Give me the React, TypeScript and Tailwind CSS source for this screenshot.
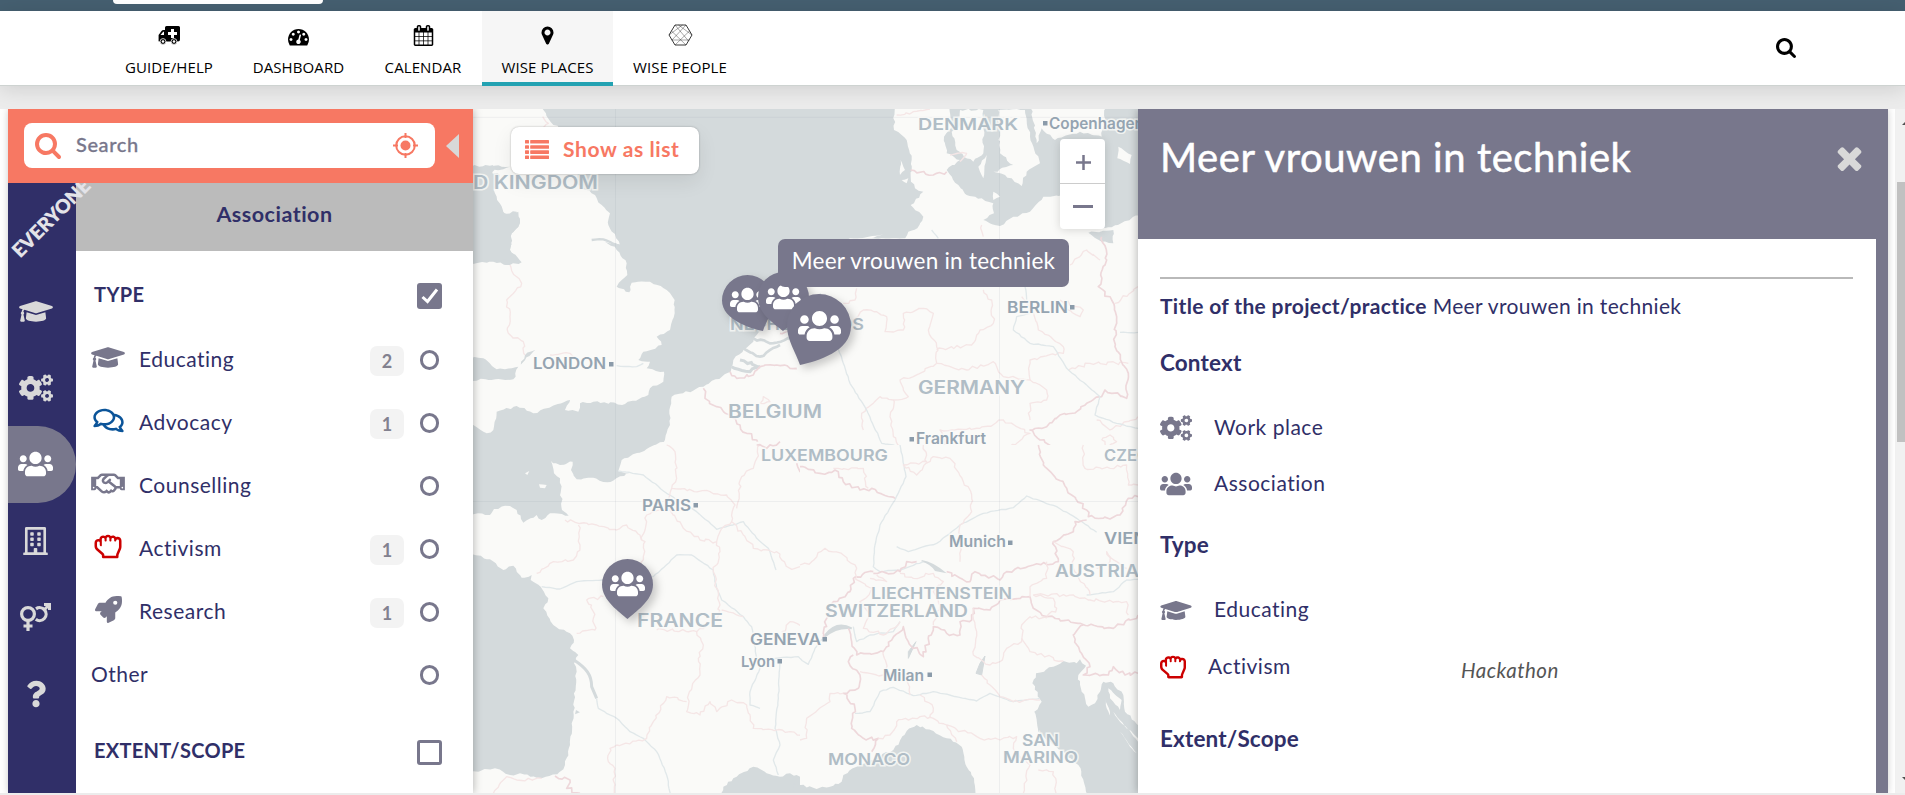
import type { ReactNode } from "react";
import {
  FaCogs,
  FaGraduationCap,
  FaQuestion,
  FaRegBuilding,
  FaRegComments,
  FaRegHandRock,
  FaRegHandshake,
  FaRocket,
  FaUsers,
} from "react-icons/fa";

/* ---------- icons ---------- */

type IconProps = { className?: string };

function Glyph({ d, className, box = "0 0 1792 1792" }: { d: string; className?: string; box?: string }) {
  return (
    <svg viewBox={box} fill="currentColor" className={className}>
      <path d={d} />
    </svg>
  );
}

const searchPath =
  "M1216 832q0-185-131.5-316.5t-316.5-131.5-316.5 131.5-131.5 316.5 131.5 316.5 316.5 131.5 316.5-131.5 131.5-316.5zm512 832q0 52-38 90t-90 38q-54 0-90-38l-343-342q-179 124-399 124-143 0-273.5-55.5t-225-150-150-225-55.5-273.5 55.5-273.5 150-225 225-150 273.5-55.5 273.5 55.5 225 150 150 225 55.5 273.5q0 220-124 399l343 343q37 37 37 90z";
const timesPath =
  "M1490 1322q0 40-28 68l-136 136q-28 28-68 28t-68-28l-294-294-294 294q-28 28-68 28t-68-28l-136-136q-28-28-28-68t28-68l294-294-294-294q-28-28-28-68t28-68l136-136q28-28 68-28t68 28l294 294 294-294q28-28 68-28t68 28l136 136q28 28 28 68t-28 68l-294 294 294 294q28 28 28 68z";
const calendarPath =
  "M192 1664h288v-288h-288v288zm352 0h320v-288h-320v288zm-352-352h288v-320h-288v320zm352 0h320v-320h-320v320zm-352-384h288v-288h-288v288zm736 736h320v-288h-320v288zm-384-736h320v-288h-320v288zm768 736h288v-288h-288v288zm-384-352h320v-320h-320v320zm-352-864v-288q0-13-9.5-22.5t-22.5-9.5h-64q-13 0-22.5 9.5t-9.5 22.5v288q0 13 9.5 22.5t22.5 9.5h64q13 0 22.5-9.5t9.5-22.5zm736 864h288v-320h-288v320zm-384-384h320v-288h-320v288zm384 0h288v-288h-288v288zm32-480v-288q0-13-9.5-22.5t-22.5-9.5h-64q-13 0-22.5 9.5t-9.5 22.5v288q0 13 9.5 22.5t22.5 9.5h64q13 0 22.5-9.5t9.5-22.5zm384-64v1280q0 52-38 90t-90 38h-1408q-52 0-90-38t-38-90v-1280q0-52 38-90t90-38h128v-96q0-66 47-113t113-47h64q66 0 113 47t47 113v96h384v-96q0-66 47-113t113-47h64q66 0 113 47t47 113v96h128q52 0 90 38t38 90z";
const dashboardPath =
  "M384 1152q0-53-37.5-90.5t-90.5-37.5-90.5 37.5-37.5 90.5 37.5 90.5 90.5 37.5 90.5-37.5 37.5-90.5zm192-448q0-53-37.5-90.5t-90.5-37.5-90.5 37.5-37.5 90.5 37.5 90.5 90.5 37.5 90.5-37.5 37.5-90.5zm428 481l101-382q6-26-7.5-48.5t-38.5-29.5-48 6.5-30 39.5l-101 382q-60 5-107 43.5t-63 98.5q-20 77 20 146t117 89 146-20 89-117q16-60-6-117t-72-91zm660-33q0-53-37.5-90.5t-90.5-37.5-90.5 37.5-37.5 90.5 37.5 90.5 90.5 37.5 90.5-37.5 37.5-90.5zm-640-640q0-53-37.5-90.5t-90.5-37.5-90.5 37.5-37.5 90.5 37.5 90.5 90.5 37.5 90.5-37.5 37.5-90.5zm448 192q0-53-37.5-90.5t-90.5-37.5-90.5 37.5-37.5 90.5 37.5 90.5 90.5 37.5 90.5-37.5 37.5-90.5zm320 448q0 261-141 483-19 29-54 29h-1402q-35 0-54-29-141-221-141-483 0-182 71-348t191-286 286-191 348-71 348 71 286 191 191 286 71 348z";
const markerPath =
  "M1152 640q0-106-75-181t-181-75-181 75-75 181 75 181 181 75 181-75 75-181zm256 0q0 109-33 179l-364 774q-16 33-47.5 52t-67.5 19-67.5-19-46.5-52l-365-774q-33-70-33-179 0-212 150-362t362-150 362 150 150 362z";

function Ambulance({ className }: IconProps) {
  return (
    <svg viewBox="0 0 22 19" className={className}>
      <path fillRule="evenodd" d="M7 1.5Q7 0 8.5 0H20.500Q22 0 22 1.500V13.500Q22 15.500 20 15.500H1.500Q0 15.500 .6 14V9L3.500 5Q4.200 4 5.500 4H7ZM2.500 9H6V5.800H5.200ZM13 3V6H10V9H13V12H16V9H19V6H16V3Z" />
      <circle cx="5" cy="15.500" r="2.900" stroke="#fff" strokeWidth=".8" />
      <circle cx="5" cy="15.500" r="1.300" fill="#fff" />
      <circle cx="16" cy="15.500" r="2.900" stroke="#fff" strokeWidth=".8" />
      <circle cx="16" cy="15.500" r="1.300" fill="#fff" />
    </svg>
  );
}

function HexNet({ className }: IconProps) {
  return (
    <svg viewBox="0 0 24 22" fill="none" stroke="#222" className={className}>
      <path d="M6.500 1H17.500L23.500 11L17.500 21H6.500L.5 11Z" strokeWidth=".9" />
      <path d="M6.500 1L20 17M17.500 1L3.500 16M3 7L17.500 21M21 7L6.500 21M.5 11L14 1M23.500 11L10 1M3 16H21" strokeWidth=".4" />
    </svg>
  );
}

function Crosshair({ className }: IconProps) {
  return (
    <svg viewBox="0 0 25 25" fill="none" stroke="currentColor" strokeWidth="2" className={className}>
      <circle cx="12.500" cy="12.500" r="9.300" />
      <circle cx="12.500" cy="12.500" r="5" fill="currentColor" stroke="none" />
      <path d="M12.500 0V5M12.500 20V25M0 12.500H5M20 12.500H25" />
    </svg>
  );
}

function ListRows({ className }: IconProps) {
  return (
    <svg viewBox="0 0 24 19" fill="currentColor" className={className}>
      {[0, 5.2, 10.3, 15.4].map((y) => (
        <g key={y}>
          <rect x="0" y={y} width="4" height="3.600" rx=".6" />
          <rect x="5.200" y={y} width="18.800" height="3.600" rx=".6" />
        </g>
      ))}
    </svg>
  );
}

function Genders({ className }: IconProps) {
  return (
    <svg viewBox="0 0 31 28" fill="none" stroke="currentColor" strokeWidth="3.200" className={className}>
      <circle cx="8" cy="11" r="6.400" />
      <path d="M8 17.500V28M3.500 23H12.500" />
      <path d="M16 5.900A6.400 6.400 0 1 1 15.800 16.200" />
      <path d="M24.500 6.500L29.500 1.500M24 1.500H29.500V7" strokeWidth="3" />
    </svg>
  );
}

/* ---------- map geometry ---------- */

type Pt = [number, number];

function parse(s: string): Pt[] {
  return s
    .trim()
    .split(/\s+/)
    .map((p) => p.split(",").map(Number) as Pt);
}

// Adds small deterministic wiggles to a polyline so that it reads as a coast or a border.
function rough(src: string, amp: number, close = false): string {
  const pts = parse(src);
  if (close) pts.push(pts[0]);
  let seed = pts.length * 7919 + Math.round(Math.abs(pts[0][0]) * 31 + Math.abs(pts[0][1]));
  const rnd = () => {
    seed = (seed * 1103515245 + 12345) % 2147483648;
    return seed / 2147483648 - 0.5;
  };
  const out: string[] = [`M${pts[0][0]} ${pts[0][1]}`];
  for (let i = 1; i < pts.length; i++) {
    const [x0, y0] = pts[i - 1];
    const [x1, y1] = pts[i];
    const len = Math.hypot(x1 - x0, y1 - y0);
    const n = Math.max(1, Math.round(len / 11));
    for (let k = 1; k <= n; k++) {
      const t = k / n;
      const j = k === n ? 0 : amp;
      out.push(`L${(x0 + (x1 - x0) * t + rnd() * j).toFixed(1)} ${(y0 + (y1 - y0) * t + rnd() * j).toFixed(1)}`);
    }
  }
  return out.join("") + (close ? "Z" : "");
}

const LAND = "#fafaf8";
const SEA = "#d4dadc";

const Land = ({ p, a = 7 }: { p: string; a?: number }) => <path d={rough(p, a, true)} fill={LAND} />;
const Sea = ({ p, a = 7 }: { p: string; a?: number }) => <path d={rough(p, a, true)} fill={SEA} />;
const Region = ({ p }: { p: string }) => (
  <path d={rough(p, 10)} fill="none" stroke="#f5e6e6" strokeWidth="4" strokeLinejoin="round" />
);
const Border = ({ p }: { p: string }) => (
  <path d={rough(p, 11)} fill="none" stroke="#eed8db" strokeWidth="5" strokeLinejoin="round" />
);
const River = ({ p }: { p: string }) => (
  <path d={rough(p, 3)} fill="none" stroke="#e1e8ea" strokeWidth="4" strokeLinejoin="round" />
);

function Label({ x, y, w, size, children, city }: { x: number; y: number; w: number; size: number; children: string; city?: boolean }) {
  return (
    <text
      x={x}
      y={y - 0.5}
      textLength={w}
      lengthAdjust="spacingAndGlyphs"
      fontSize={size}
      fontWeight={600}
      fill={city ? "#95a4b1" : "#b0bdc6"}
      stroke="#fafaf8"
      strokeOpacity=".8"
      strokeWidth="3"
      paintOrder="stroke"
    >
      {children}
    </text>
  );
}

function EuropeMap() {
  return (
    <svg viewBox="473 109 665 684" className="block h-[684px] w-[665px] bg-[#d4dadc] font-['Inter','Liberation_Sans',sans-serif]">
      {/* north-west: Britain and the Channel */}
      <g transform="translate(470 100) scale(.33333)">
        <Land p="-20,0 218,27 250,75 300,95 330,190 320,250 375,285 395,315 420,340 415,375 450,435 405,425 440,450 470,490 472,525 440,560 478,577 485,548 540,545 590,570 614,600 614,640 600,690 560,710 575,735 520,755 505,780 540,785 530,805 582,815 580,845 540,865 535,885 465,912 370,905 330,910 325,935 285,930 300,900 230,925 190,940 140,918 80,935 70,990 50,1000 10,975 -20,980 -20,840 130,838 145,800 195,750 165,765 145,800 80,808 40,775 -20,770 -20,490 70,485 120,495 155,487 120,450 125,400 150,370 145,335 115,345 95,330 70,280 90,225 60,215 70,195 -20,200" />
        <Sea p="-20,230 65,210 75,280 100,340 140,335 145,380 125,400 120,450 150,485 90,480 -20,490" />
        <Sea p="40,220 120,200 72,197" />
        <path d={rough("365,420 400,418 450,437", 4)} fill="none" stroke={SEA} strokeWidth="7" />
        <Land p="1400,500 960,540 905,660 860,705 850,725 790,780 782,815 700,860 605,890 598,930 600,975 580,1030 520,1055 1400,1055" />
        <path d={rough("850,715 900,730 960,715", 8)} fill="none" stroke={SEA} strokeWidth="8" />
        <path d={rough("820,745 870,770 930,735", 8)} fill="none" stroke={SEA} strokeWidth="8" />
        <path d={rough("785,800 840,815 870,800 810,780", 8)} fill="none" stroke={SEA} strokeWidth="9" />
        <Region p="218,50 235,70 190,110 170,150" />
        <Region p="120,495 140,530 155,550 110,600 120,650 115,700 160,725 165,765" />
        <River p="440,797 500,800 520,790" />
        <Region p="240,765 300,760 315,770" />
        <Border p="780,815 800,835 850,825 870,800 920,795 960,805 1020,820 1050,850" />
        <Border p="700,865 705,895 740,920 780,945 810,975 830,1000 860,1020 870,1045 920,1040" />
        <Border p="1060,800 1040,850 1070,890 1080,950 1090,970 1050,1000 1020,1050" />
        <Border p="930,700 980,690 1010,640 1080,620 1160,600 1160,560" />
        <Region p="870,910 900,905 880,890 870,910" />
      </g>

      {/* north-east: Denmark and Germany */}
      <g transform="translate(800 100) scale(.33333)">
        <Land a={2} p="310,415 1060,415 1060,1060 -10,1060 -10,500 150,415" />
        <Land p="285,0 282,90 320,120 335,180 332,230 345,265 370,275 332,315 370,350 352,385 325,395 310,425 1060,425 1060,0" />
        <Sea p="440,0 460,75 432,110 440,160 480,180 440,210 475,255 500,285 545,295 580,310 582,340 550,360 600,378 640,350 690,335 730,290 790,285 870,295 850,380 935,382 1060,325 1060,0 920,0 905,110 840,95 765,120 725,85 710,130 690,0" />
        <Land p="480,30 550,30 550,160 520,185 470,150 455,95 480,75" />
        <Land p="595,30 675,30 690,110 720,190 680,215 665,258 635,235 580,215 640,195 600,160" />
        <Land p="560,165 550,235 535,200" a={4} />
        <Land p="955,140 995,165 990,192 952,175" a={4} />
        <Land p="580,275 600,290 580,300" a={4} />
        <Sea p="865,398 940,390 940,430 905,425" a={5} />
        <Land p="302,180 315,210 300,225" a={4} />
        <Land p="305,240 325,235 320,250" a={4} />
        <Land p="185,415 250,403 210,415" a={3} />
        <Border p="332,210 400,225 440,215" />
        <Region p="290,45 340,35 390,27" />
        <Region p="545,375 550,410" />
        <Region p="170,565 165,600 130,610" />
        <Region p="155,665 190,630 230,635 260,650 255,695 310,690 310,640 370,625 400,640 385,690 410,740 410,790" />
        <Region p="550,570 575,600 580,670 540,690 515,735 410,750" />
        <Region p="410,790 340,830 300,840 325,890 280,900 240,890 185,940 190,990" />
        <Region p="410,790 500,810 580,785 610,830 690,840 740,870 740,900 690,910 690,960" />
        <Region p="690,840 690,780 790,760 790,740 715,690 690,620 665,590" />
        <Region p="780,600 850,630 840,650 790,620" />
        <Region p="805,810 870,790 985,790" />
        <Region p="810,495 860,450 900,480" />
        <Region p="945,610 1014,560" />
        <Region p="280,900 270,950 280,1010 310,1050" />
        <Region p="600,1060 690,1000 610,960 540,985 420,990 440,1050" />
        <Region p="905,1020 930,1005 950,1025 925,1040 905,1020" />
        <Region p="890,960 930,990 1014,950" />
        <Region p="480,185 500,160 450,165" />
        <Border p="905,410 920,480 895,560 935,600 950,650 945,740 985,820 980,895 915,870 905,890 860,910 830,935 780,945 740,980 690,990 720,1020 780,1050" />
        <River p="395,390 415,415" />
        <River p="60,580 130,790 150,850 200,930 245,1030 300,1040" />
        <River p="690,640 650,650 640,690 690,730 760,740 800,805 900,890 885,945 950,970 1014,985" />
        <River p="960,697 1014,697" />
        <River p="675,560 680,600" />
      </g>

      {/* south-west: France */}
      <g transform="translate(470 445) scale(.33333)">
        <Land p="570,-8 530,12 455,45 445,78 480,85 412,112 355,98 320,103 303,75 308,50 270,60 243,48 252,85 270,100 276,195 296,212 240,205 215,225 200,210 160,233 140,195 120,183 72,192 60,210 -10,203 -10,325 60,343 100,375 130,362 155,398 185,390 182,405 212,425 235,460 220,490 250,540 300,565 312,585 300,610 325,630 312,655 320,680 310,800 300,900 285,960 262,988 215,1000 150,985 120,990 75,970 -10,985 -10,1060 1060,1060 1060,-8" />
        <Land p="165,85 178,78 172,90" a={2} />
        <Land p="207,118 230,120 225,130 210,128" a={2} />
        <Sea p="318,795 330,802 315,808" a={3} />
        <Sea p="745,1070 760,1025 800,995 850,965 890,985 930,995 960,985 1060,1025 1060,1070" />
        <path d="M312 645C350 670 365 690 365 725L380 760" fill="none" stroke={SEA} strokeWidth="9" />
        <River p="380,760 385,790 440,820 480,860 520,880 560,920 590,990 602,1050" />
        <River p="215,425 270,432 320,410 400,405 550,395 620,330 665,330 730,375 740,430 755,465 820,515 845,545 860,640 870,670 840,740 840,780 870,790" />
        <River p="445,78 520,90 590,145 680,200 740,253 820,230 860,280 895,310 918,375" />
        <River p="930,650 925,760 915,850 930,900 910,945 925,990" />
        <River p="860,645 985,635 1020,660" />
        <Region p="590,0 615,20 620,100 605,130 720,140 770,150 795,180 785,230 820,270 850,310 920,320 960,370 1020,360" />
        <Region p="870,0 850,70 815,95 800,190" />
        <Region p="605,130 590,180 640,250 690,285 740,290 750,260 785,230" />
        <Region p="285,225 380,240 440,255 470,240 510,270 525,290 515,350 470,400 440,415" />
        <Region p="325,240 330,300 310,345 250,350 200,385" />
        <Region p="515,285 530,210 580,195" />
        <Region p="740,290 750,320 730,380 750,480 740,520 680,560 560,555" />
        <Region p="320,565 375,555 370,500 350,465 400,455" />
        <Region p="680,560 700,600 685,640 690,690 655,750 650,800 690,810 720,770 740,800 785,765 830,780 850,850 960,860 1020,880" />
        <Region p="650,770 590,755 550,830 530,880 420,910 415,950 435,970 430,1050" />
        <Region p="755,495 800,510 820,515" />
        <Region p="935,560 960,530 1020,560" />
        <Border p="255,993 300,1005 290,1030 330,1045" />
        <Region p="70,1045 110,995 140,1005 215,1000" />
        <Border p="860,0 890,10 930,-10" />
        <Border p="980,55 990,80 1020,60" />
      </g>

      {/* south-east: the Alps and Italy */}
      <g transform="translate(800 445) scale(.33333)">
        <path d="M0 0H1030V1070H0Z" fill={LAND} />
        <Sea p="-20,1015 50,1032 100,1022 125,1010 130,990 170,965 280,915 320,858 350,840 400,858 440,880 485,905 500,965 522,1000 525,1070 -20,1070" />
        <Sea p="870,1070 835,960 760,900 715,860 703,800 725,770 697,715 708,685 760,665 790,648 830,655 840,643 858,662 835,690 845,740 865,785 885,775 900,740 910,710 940,715 970,750 975,800 1060,880 1060,1070" />
        <Land p="925,730 965,765 960,795 930,760" a={4} />
        <Land p="915,760 935,820 920,790" a={4} />
        <Land p="940,800 1014,890 1014,880 960,830" a={4} />
        <Land p="960,860 1010,925 990,905" a={4} />
        <path d="M75 570Q110 525 155 550Q110 545 75 575Z" fill={SEA} stroke={SEA} strokeWidth="5" />
        <path d="M365 345Q400 350 440 385L405 378Q390 355 365 350Z" fill={SEA} />
        <path d="M555 633L545 690L528 685L540 655ZM348 590L325 640L325 620Z" fill={SEA} stroke={SEA} strokeWidth="3" />
        <River p="300,0 318,95 285,165 240,240 225,300 220,365 240,380 300,375 370,350" />
        <River p="290,305 325,320 410,295 480,240 550,205 640,188 680,153 770,185 830,220 890,262" />
        <River p="160,545 170,590 210,570 280,560 300,530" />
        <River p="165,805 210,800 240,740 280,727 340,752 400,740 530,768 570,745 640,770 720,760" />
        <River p="0,640 25,658 45,610 70,580" />
        <River p="860,450 940,440 980,405 1014,403" />
        <Border p="0,65 60,85 105,75 130,110 180,135 215,130 285,160" />
        <Border p="715,0 730,60 800,130 860,195 865,215 930,222 960,210 985,160 1014,155" />
        <Border p="860,225 825,230 820,260 760,290 775,350 700,360 620,380 600,405 525,380 510,410 440,380" />
        <Border p="220,380 160,400 150,440 100,470 80,520 70,580" />
        <Border p="145,550 155,590 170,630 250,620 310,545 325,590 370,635 400,545 440,565 480,570 480,530 515,525 520,490 570,495 600,465 690,455 700,490 740,515 840,535 940,550 1014,510" />
        <Border p="220,385 300,380 320,350 350,350" />
        <Border p="160,630 145,650 180,690 175,730 130,745 165,790 155,850 190,880 235,880 215,920" />
        <Border p="850,540 820,570 840,620 870,665 850,690 925,690 940,665 975,690 1014,685" />
        <Region p="370,0 380,50 310,60 350,90 400,35 450,40 490,110 515,150 515,200 480,240 480,350" />
        <Region p="850,0 855,70 930,70 980,60 985,120 1014,120" />
        <Region p="0,360 35,350 75,310 130,330 170,370 170,400" />
        <Region p="690,455 690,425 740,400 740,350" />
        <Region p="700,450 760,460 770,490 740,515" />
        <Region p="700,450 820,450 870,465 980,470 985,510" />
        <Region p="760,290 820,320 820,370 870,450" />
        <Region p="520,490 530,560 520,630 570,660 600,650 620,610 665,590 665,540 690,515 740,520" />
        <Region p="665,580 690,620 790,648" />
        <Region p="545,690 570,720 600,755 640,770 720,765" />
        <Region p="165,400 220,430 180,470 210,510 190,550 250,570 300,530" />
        <Region p="300,385 340,400 400,385 430,410 400,440 420,480 400,540" />
        <Region p="210,400 260,410 230,390" />
        <Region p="250,620 260,680 320,690 330,750" />
        <Region p="180,680 250,690" />
        <Region p="130,745 90,745 90,770 20,820 20,880 0,885" />
        <Region p="235,880 270,870 290,830 360,815 400,820 440,840 470,890" />
        <Region p="360,750 400,790 390,820" />
        <Region p="440,840 540,880 600,885 650,875 640,910 690,960 670,1045" />
        <Region p="715,975 760,980 768,1045" />
        <Region p="100,70 190,70 205,130" />
        <Region p="890,370 930,350 920,320 950,350 980,370" />
      </g>

      <path d="M615.500 109V793M999.500 109V793M473 117.300H1138M473 501.500H1138" stroke="#8a96a0" strokeOpacity=".11" />

      <Label x={473} y={189.5} w={125} size={18}>D KINGDOM</Label>
      <Label x={918} y={130} w={100} size={16.5}>DENMARK</Label>
      <Label x={533} y={369.5} w={73} size={15.5} city>LONDON</Label>
      <Label x={730} y={330} w={134} size={16}>NETHERLANDS</Label>
      <Label x={728} y={418} w={94} size={18}>BELGIUM</Label>
      <Label x={918} y={394.5} w={107} size={18}>GERMANY</Label>
      <Label x={1007} y={313} w={61} size={16} city>BERLIN</Label>
      <Label x={1049} y={129} w={95} size={15.5} city>Copenhagen</Label>
      <Label x={916} y={444.5} w={70} size={15.5} city>Frankfurt</Label>
      <Label x={761} y={461} w={127} size={16}>LUXEMBOURG</Label>
      <Label x={1104} y={461} w={74} size={16}>CZECHIA</Label>
      <Label x={642} y={511.5} w={49} size={15.5} city>PARIS</Label>
      <Label x={949} y={547.5} w={57} size={15.5} city>Munich</Label>
      <Label x={1104} y={544} w={70} size={16} city>VIENNA</Label>
      <Label x={1055} y={577} w={84} size={17}>AUSTRIA</Label>
      <Label x={637} y={627} w={86} size={18}>FRANCE</Label>
      <Label x={871} y={599} w={141} size={16}>LIECHTENSTEIN</Label>
      <Label x={825} y={617} w={143} size={17}>SWITZERLAND</Label>
      <Label x={750} y={645.5} w={71} size={15.5} city>GENEVA</Label>
      <Label x={741} y={667} w={34} size={15} city>Lyon</Label>
      <Label x={883} y={681} w={41} size={15.5} city>Milan</Label>
      <Label x={828} y={765} w={82} size={16.5}>MONACO</Label>
      <Label x={1022} y={746.5} w={37} size={16.5}>SAN</Label>
      <Label x={1003} y={763.5} w={75} size={16.5}>MARINO</Label>
      <g fill="#8b9baa">
        {[[609, 362], [1043, 121], [1070, 305], [909.5, 437], [693.5, 503], [1008, 540.5], [822.5, 637], [777.5, 659], [927.5, 672.5]].map(([x, y]) => (
          <rect key={`${x}-${y}`} x={x} y={y} width="4.500" height="4.500" />
        ))}
      </g>
    </svg>
  );
}

/* ---------- pins ---------- */

function Pin({ d, box, className, children }: { d: string; box: string; className: string; children: ReactNode }) {
  return (
    <div className={`absolute ${className}`}>
      <svg viewBox={box} className="absolute inset-0 h-full w-full overflow-visible fill-[#78778c] drop-shadow-[4px_4px_4px_rgba(0,0,0,.2)]">
        <path d={d} />
      </svg>
      {children}
    </div>
  );
}

const pinBody = "M25.500 60C18 53 0 42 0 25.500A25.500 25.500 0 0 1 51 25.500C51 42 33 53 25.500 60Z";

function MapPins() {
  return (
    <>
      <Pin className="left-[129px] top-[450px] h-[60px] w-[51px]" box="0 0 51 60" d={pinBody}>
        <FaUsers className="absolute left-[8px] top-[9px] h-[32px] w-[35px] text-white" />
      </Pin>
      <Pin className="left-[249px] top-[166px] h-[56px] w-[51px]" box="0 0 51 56" d="M41 56C30 54 0 45 0 25.500A25.500 25.500 0 0 1 51 25.500C51 38 44 46 41 56Z">
        <FaUsers className="absolute left-[8px] top-[9px] h-[32px] w-[35px] text-white" />
      </Pin>
      <Pin className="left-[285px] top-[163px] h-[59px] w-[51px]" box="0 0 51 59" d="M25 59C14 50 0 41 0 25.500A25.500 25.500 0 0 1 51 25.500C51 42 35 51 25 59Z">
        <FaUsers className="absolute left-[8px] top-[9px] h-[32px] w-[35px] text-white" />
      </Pin>
      <Pin className="left-[314px] top-[185px] h-[71px] w-[64px]" box="0 0 64 71" d="M13 71C9 59 0 46 0 32A32 32 0 0 1 64 32C64 58 30 67 13 71Z">
        <FaUsers className="absolute left-[11px] top-[12px] h-[40px] w-[43px] text-white" />
      </Pin>
    </>
  );
}

/* ---------- top navigation ---------- */

function NavItem({ width, icon, label, active }: { width: string; icon: ReactNode; label: string; active?: boolean }) {
  return (
    <div
      className={`flex h-[75px] flex-col items-center ${width} ${
        active ? "border-b-4 border-[#23a2b2] bg-[#f6f6f6]" : ""
      }`}
    >
      <div className="flex h-[48px] items-center justify-center">{icon}</div>
      <span className="whitespace-nowrap text-[15px] leading-[16px] tracking-[.1px] text-black">{label}</span>
    </div>
  );
}

function TopNav() {
  return (
    <header className="relative z-10 shrink-0 font-['Open_Sans','Noto_Sans',sans-serif]">
      <div className="h-[11px] bg-[#455f70] pl-[113px]">
        <div className="h-[4px] w-[210px] rounded-b-[4px] bg-white" />
      </div>
      <nav className="flex h-[74px] items-start bg-white pl-[105px] shadow-[0_1px_0_#ced3d1,0_4px_20px_rgba(0,0,0,.13)]">
        <NavItem width="w-[128px]" icon={<Ambulance className="h-[19px] w-[22px]" />} label="GUIDE/HELP" />
        <NavItem width="w-[131px]" icon={<Glyph d={dashboardPath} className="mt-[3px] h-[21px] w-[21px]" />} label="DASHBOARD" />
        <NavItem width="w-[118px]" icon={<Glyph d={calendarPath} className="h-[21px] w-[21px]" />} label="CALENDAR" />
        <NavItem width="w-[131px]" icon={<Glyph d={markerPath} className="h-[21px] w-[21px]" />} label="WISE PLACES" active />
        <NavItem width="w-[134px]" icon={<HexNet className="h-[22px] w-[25px]" />} label="WISE PEOPLE" />
        <Glyph d={searchPath} box="64 128 1664 1664" className="ml-auto mr-[109px] mt-[27px] h-[20px] w-[20px]" />
      </nav>
    </header>
  );
}

/* ---------- left panel ---------- */

function SearchBar() {
  return (
    <div className="flex h-[74px] shrink-0 items-center bg-[#f77863] pb-px pl-4">
      <div className="flex h-[45px] w-[411px] items-center rounded-lg bg-white pl-[11px] pr-[17px]">
        <Glyph d={searchPath} box="64 128 1664 1664" className="h-[26px] w-[26px] text-[#f77863]" />
        <span className="-mt-[4px] ml-[15px] grow text-[20px] font-medium leading-6 tracking-[.6px] text-[#78778c] [-webkit-text-stroke:.3px]">
          Search
        </span>
        <Crosshair className="h-[25px] w-[25px] text-[#f77863]" />
      </div>
      <svg viewBox="0 0 13 24" className="ml-[11px] h-[24px] w-[13px] fill-[#d8d8d8]">
        <path d="M13 0V24L0 12Z" />
      </svg>
    </div>
  );
}

function SideTabs() {
  const rows: { icon: ReactNode; active?: boolean }[] = [
    { icon: <FaGraduationCap className="h-[27px] w-[34px]" /> },
    { icon: <FaCogs className="h-[28px] w-[34px]" /> },
    { icon: <FaUsers className="h-[28px] w-[35px] text-white" />, active: true },
    { icon: <FaRegBuilding className="h-[28px] w-[25px]" /> },
    { icon: <Genders className="h-[28px] w-[31px]" /> },
    { icon: <FaQuestion className="h-[28px] w-[20px]" /> },
  ];
  return (
    <div className="relative z-10 w-[68px] shrink-0 bg-[#302f68] text-[#d9d9d9]">
      <div className="absolute -left-2 top-0 h-[90px] w-[110px] overflow-hidden">
        <span className="absolute left-[-4px] top-[23px] w-[110px] -rotate-45 text-center text-[19.5px] font-extrabold leading-6 tracking-[-.2px] text-[#e3e3e8]">
          EVERYONE
        </span>
      </div>
      <div className="flex flex-col pt-[90px]">
        {rows.map((r, i) => (
          <div
            key={i}
            className={`flex h-[76.5px] items-center justify-center pr-[13px] ${
              r.active ? "rounded-r-[38px] bg-[#78778c]" : ""
            }`}
          >
            {r.icon}
          </div>
        ))}
      </div>
    </div>
  );
}

function FilterRow({ icon, label, count }: { icon?: ReactNode; label: string; count?: number }) {
  return (
    <div className="flex h-[63px] items-center pl-[15px] pr-[34px]">
      {icon && <div className="-mt-1 mr-[14px] flex w-[34px] justify-center">{icon}</div>}
      <span className="-mt-[2px] grow text-[21px] leading-7 tracking-[.5px] text-[#302f68]">{label}</span>
      {count !== undefined && (
        <span className="mr-4 mt-[3px] flex h-[30px] w-[34px] items-center justify-center rounded-[7px] bg-[#f3f3f3] text-[18px] font-bold text-[#82818f]">
          {count}
        </span>
      )}
      <span className="h-[20px] w-[19px] rounded-full border-[3px] border-[#78778c]" />
    </div>
  );
}

function LeftPanel() {
  return (
    <aside className="z-10 flex w-[465px] shrink-0 flex-col bg-white shadow-[1px_0_8px_rgba(0,0,0,.25)]">
      <SearchBar />
      <div className="flex grow">
        <SideTabs />
        <div className="flex grow flex-col">
          <div className="flex h-[68px] items-center justify-center bg-[#bbbbbb] pb-[5px] text-[21.5px] font-bold tracking-[.5px] text-[#302f68]">
            Association
          </div>
          <div className="flex h-[77px] items-center justify-between pl-[18px] pr-[31px] pt-[13px]">
            <span className="-mt-[4px] text-[20px] font-bold tracking-[.4px] text-[#302f68]">TYPE</span>
            <span className="flex h-[26px] w-[25px] items-center justify-center rounded-[3px] bg-[#78778c]">
              <svg viewBox="0 0 18 16" fill="none" stroke="#fff" strokeWidth="3" className="h-[16px] w-[18px]">
                <path d="M1.500 9L6.500 13.500L16 1.500" />
              </svg>
            </span>
          </div>
          <FilterRow icon={<FaGraduationCap className="h-[27px] w-[34px] text-[#78778c]" />} label="Educating" count={2} />
          <FilterRow icon={<FaRegComments className="h-[27px] w-[31px] text-[#0b5499]" />} label="Advocacy" count={1} />
          <FilterRow icon={<FaRegHandshake className="h-[27px] w-[35px] text-[#78778c]" />} label="Counselling" />
          <FilterRow icon={<FaRegHandRock className="h-[27px] w-[28px] text-[#cc0000]" />} label="Activism" count={1} />
          <FilterRow icon={<FaRocket className="h-[27px] w-[27px] text-[#78778c]" />} label="Research" count={1} />
          <FilterRow label="Other" />
          <div className="mt-[33px] flex items-center justify-between pl-[18px] pr-[31px]">
            <span className="-mt-[4px] text-[20px] font-bold tracking-[.3px] text-[#302f68]">EXTENT/SCOPE</span>
            <span className="h-[25px] w-[25px] rounded-[3px] border-[3px] border-[#78778c]" />
          </div>
        </div>
      </div>
    </aside>
  );
}

/* ---------- map ---------- */

function MapPane() {
  return (
    <section className="relative h-[684px] w-[665px] shrink-0 overflow-hidden">
      <EuropeMap />
      <MapPins />
      <div className="absolute left-[38px] top-[18px] flex h-[47px] w-[188px] items-center rounded-lg bg-white pl-[14px] shadow-[0_0_2px_rgba(0,0,0,.3),0_8px_20px_rgba(0,0,0,.08)]">
        <ListRows className="-mt-[3px] h-[19px] w-[24px] text-[#f77863]" />
        <span className="-mt-[3px] ml-[14px] whitespace-nowrap text-[21px] font-bold tracking-[.6px] text-[#f77863]">
          Show as list
        </span>
      </div>
      <div className="absolute left-[587px] top-[30px] flex h-[90px] w-[45px] flex-col rounded bg-white text-[#78778c] shadow-[0_1px_10px_rgba(0,0,0,.15)]">
        <div className="flex h-[45px] items-center justify-center border-b border-[#ccc] pl-[2px] pt-[2px]">
          <svg viewBox="0 0 15 15" className="h-[15px] w-[15px] fill-current">
            <path d="M6.250 0H8.750V6.250H15V8.750H8.750V15H6.250V8.750H0V6.250H6.250Z" />
          </svg>
        </div>
        <div className="flex h-[45px] items-center justify-center">
          <span className="h-[3px] w-[20px] bg-[#78778c]" />
        </div>
      </div>
      <div className="absolute left-[305px] top-[130px] flex h-[48px] w-[291px] items-center justify-center whitespace-nowrap rounded-[7px] bg-[#78778c] pb-[4px] text-[22.5px] tracking-[.24px] text-white">
        Meer vrouwen in techniek
      </div>
    </section>
  );
}

/* ---------- detail panel ---------- */

function DetailRow({ icon, label, note, className }: { icon: ReactNode; label: string; note?: string; className: string }) {
  return (
    <div className={`flex h-7 items-center ${className}`}>
      <div className="mt-[2px] flex shrink-0 items-center">{icon}</div>
      <span className="-mt-px w-[120px] text-[21px] leading-7 tracking-[.5px]">{label}</span>
      {note && <span className="ml-[133px] mt-[9px] text-[20.5px] italic tracking-[.5px] text-[#555]">{note}</span>}
    </div>
  );
}

function DetailPanel() {
  return (
    <section className="z-10 flex w-[750px] shrink-0 flex-col bg-[#78778c] shadow-[-1px_0_8px_rgba(0,0,0,.25)]">
      <div className="flex h-[130px] shrink-0 items-start justify-between pl-[22px] pr-[26px] pt-[23px]">
        <h1 className="whitespace-nowrap text-[40px] leading-[50px] tracking-[.55px] text-white [-webkit-text-stroke:.5px]">
          Meer vrouwen in techniek
        </h1>
        <Glyph d={timesPath} box="302 302 1188 1252" className="mt-[14px] h-[25px] w-[25px] text-[#d9d9d9]" />
      </div>
      <div className="mr-[12px] grow bg-white pl-[22px] pr-[23px] text-[#302f68]">
        <div className="mt-[38px] h-[2px] bg-[#b9b9b9]" />
        <p className="mt-[13px] whitespace-nowrap text-[21px] leading-7 tracking-[.34px]">
          <b>Title of the project/practice</b> Meer vrouwen in techniek
        </p>
        <h2 className="mt-[29px] text-[22.5px] font-bold leading-7 tracking-[.15px]">Context</h2>
        <DetailRow className="mt-[36px]" icon={<FaCogs className="mr-[22px] h-[26px] w-[32px] text-[#78778c]" />} label="Work place" />
        <DetailRow className="mt-[28px]" icon={<FaUsers className="mr-[22px] h-[26px] w-[32px] text-[#78778c]" />} label="Association" />
        <h2 className="mt-[34px] text-[22.5px] font-bold leading-7 tracking-[.15px]">Type</h2>
        <DetailRow className="mt-[36px]" icon={<FaGraduationCap className="mr-[22px] h-[25px] w-[32px] text-[#78778c]" />} label="Educating" />
        <DetailRow className="mt-[29px]" icon={<FaRegHandRock className="mr-[22px] h-[26px] w-[26px] text-[#cc0000]" />} label="Activism" note="Hackathon" />
        <h2 className="mt-[45px] text-[22.5px] font-bold leading-7 tracking-[.15px]">Extent/Scope</h2>
      </div>
    </section>
  );
}

function Scrollbar() {
  return (
    <div className="ml-[7px] flex w-[10px] flex-col bg-[#f1f1f1] pl-[2px]">
      <svg viewBox="0 0 8 73" className="h-[73px] w-[8px] fill-[#505050]">
        <path d="M5 16L8 13V16Z" />
      </svg>
      <div className="h-[260px] bg-[#c1c1c1]" />
      <svg viewBox="0 0 8 351" className="h-[351px] w-[8px] fill-[#505050]">
        <path d="M5 335H8V338Z" />
      </svg>
    </div>
  );
}

export default function App() {
  return (
    <div className="flex h-[795px] w-[1905px] flex-col overflow-hidden bg-[#ececec] font-['Lato','Noto_Sans',sans-serif]">
      <TopNav />
      <main className="mt-[24px] flex h-[684px] overflow-hidden bg-white pl-2">
        <LeftPanel />
        <MapPane />
        <DetailPanel />
        <Scrollbar />
      </main>
    </div>
  );
}
